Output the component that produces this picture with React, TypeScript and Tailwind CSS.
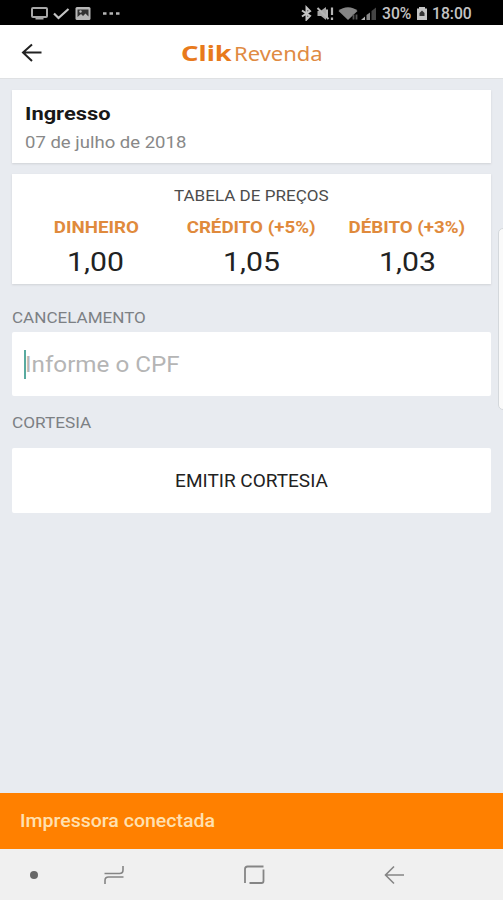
import type { ReactNode } from "react";

const prices = [
  { label: "DINHEIRO", value: "1,00" },
  { label: "CRÉDITO (+5%)", value: "1,05" },
  { label: "DÉBITO (+3%)", value: "1,03" },
];

// Wide text: the app's type is a bit broader than plain Roboto
const Wide = ({
  className,
  children,
}: {
  className: string;
  children: ReactNode;
}) => (
  <span className={`inline-block whitespace-nowrap ${className}`}>
    {children}
  </span>
);

const StatusBar = () => (
  <div className="flex h-[25px] items-center bg-black pl-[30px] pr-[32px] text-[#c4c4c4]">
    <svg width="92" height="16" viewBox="0 0 92 16" fill="none">
      <rect x="2" y="3" width="15" height="9" rx="1" stroke="#a8a8a8" strokeWidth="2" />
      <path d="M5.500 13.500h8" stroke="#a8a8a8" strokeWidth="2" />
      <path d="M24 8.500l4.500 4.500L38.500 4" stroke="#c4c4c4" strokeWidth="2.200" />
      <rect x="45.500" y="2" width="15" height="13" rx="1.500" fill="#b8b8b8" />
      <path d="M47.500 4.500h11v7l-3-3-2.500 2.500-2-2-3.500 3z" fill="#333" />
      <circle cx="50.500" cy="6.500" r="1.200" fill="#b8b8b8" />
      <path d="M73 8.500h3.500M79.500 8.500H83M86 8.500h3.500" stroke="#b5b5b5" strokeWidth="2.500" />
    </svg>
    <div className="ml-auto flex items-center">
      <svg width="80" height="16" viewBox="0 0 80 16" fill="none">
        <path d="M1 5.500l8 5.500-3.500 3.500V2.500L9 6l-8 5.500" stroke="#c4c4c4" strokeWidth="2" />
        <path d="M16.500 6h3L25 2v13l-5-4h-3.500z" fill="#a8a8a8" />
        <path d="M16.500 3l11 11M26 4.500v8" stroke="#b5b5b5" strokeWidth="2" />
        <path d="M31 2.500v7.500M31 12.500V15" stroke="#b5b5b5" strokeWidth="2.200" />
        <path d="M37.500 6c5-5 14-5 19 0L47 15z" fill="#858585" />
        <path d="M52.500 9.500v5M55.500 9.500v5" stroke="#555" strokeWidth="1.800" />
        <path d="M60 15l4-3.500V15z" fill="#b5b5b5" />
        <path d="M65.500 10L69 7.500V15h-3.500z" fill="#888" />
        <path d="M70.500 6L75 2.500V15h-4.500z" fill="#444" />
      </svg>
      <Wide className="mt-[2px] ml-[1px] w-[31px] origin-left scale-x-[0.98] text-[16px] leading-none font-medium">
        30%
      </Wide>
      <svg width="12" height="16" viewBox="0 0 12 16" className="ml-[3px]">
        <path d="M3 3.500V2h6v1.500h2V15H1V3.500z" fill="#c4c4c4" />
        <path d="M3.500 11V8L6 5.500 8.500 8v3z" fill="#333" />
      </svg>
      <Wide className="mt-[2px] ml-[4px] w-[39px] origin-left scale-x-[0.98] text-[16px] leading-none font-medium">
        18:00
      </Wide>
    </div>
  </div>
);

const Header = () => (
  <header className="flex h-[54px] items-center border-b border-[#dfe1e3] bg-white pl-[20px]">
    <svg width="23" height="20" viewBox="0 0 23 20" className="mt-[2px]" fill="none" stroke="#222" strokeWidth="2">
      <path d="M21.500 9.500H3M12 1.500L3 9.500l9 8.500" />
    </svg>
    <div className="mt-[2px] ml-[138px] flex items-baseline font-['Noto_Sans'] leading-none text-[#e87a1c]">
      <Wide className="w-[53px] origin-left scale-x-[1.24] text-[22px] font-bold">
        Clik
      </Wide>
      <Wide className="origin-left scale-x-[1.1] text-[20px] text-[#e08a42]">
        Revenda
      </Wide>
    </div>
  </header>
);

const PriceTable = () => (
  <div className="mt-[11px] h-[110px] bg-white px-[6px] pt-[12px] text-center shadow-[0_1px_2px_#cfd2d6]">
    <div className="h-[19px] leading-[19px]">
      <Wide className="scale-x-[1.1] text-[15.5px] text-[#4c4c4c]">
        TABELA DE PREÇOS
      </Wide>
    </div>
    <div className="grid grid-cols-3">
      {prices.map((price) => (
        <div key={price.label}>
          <div className="mt-[13px] h-[20px] leading-[20px]">
            <Wide className="scale-x-[1.17] text-[16px] font-bold text-[#e08a3c]">
              {price.label}
            </Wide>
          </div>
          <div className="mt-[8px] h-[32px] leading-[32px]">
            <Wide className="scale-x-[1.16] text-[26px] text-[#222]">
              {price.value}
            </Wide>
          </div>
        </div>
      ))}
    </div>
  </div>
);

const NavigationBar = () => (
  <nav className="flex h-[51px] items-center bg-[#f0f0f0] pt-[1px]">
    <span className="ml-[30px] h-[8px] w-[8px] rounded-full bg-[#686868]" />
    <svg width="22" height="22" viewBox="0 0 22 22" className="ml-[65px]" fill="none" stroke="#858585" strokeWidth="1.600">
      <path d="M1.500 9.500h15q3.500 0 3.500-3.500V2" />
      <path d="M20.500 13H5.500Q2 13 2 16.500V20" />
    </svg>
    <svg width="22" height="20" viewBox="0 0 22 20" className="ml-[118px]" fill="none" stroke="#858585" strokeWidth="1.800">
      <path d="M20.500 1.500H4.500Q2 1.500 2 4v14" />
      <path d="M20.500 4.500V16q0 2-2 2H6.500" />
    </svg>
    <svg width="22" height="20" viewBox="0 0 22 20" className="ml-[118px]" fill="none" stroke="#858585" strokeWidth="1.600">
      <path d="M21 10H2.500M11 1.500L2.500 10l8.500 8.500" />
    </svg>
  </nav>
);

const App = () => {
  return (
    <div className="relative flex h-[900px] w-[503px] flex-col overflow-hidden bg-[#e8ebf0] font-['Roboto',sans-serif]">
      <StatusBar />
      <Header />

      <main className="flex-1 px-[12px] pt-[11px]">
        <div className="h-[73px] bg-white px-[13px] pt-[13px] shadow-[0_1px_2px_#cfd2d6]">
          <div className="h-[22px] leading-[22px]">
            <Wide className="origin-left scale-x-[1.15] text-[19px] font-bold text-[#181818]">
              Ingresso
            </Wide>
          </div>
          <div className="mt-[7px] h-[20px] leading-[20px]">
            <Wide className="origin-left scale-x-[1.09] text-[17px] text-[#888]">
              07 de julho de 2018
            </Wide>
          </div>
        </div>

        <PriceTable />

        <h3 className="mt-[24px] h-[20px] leading-[20px]">
          <Wide className="origin-left scale-x-[1.1] text-[15.5px] text-[#7c8084]">
            CANCELAMENTO
          </Wide>
        </h3>
        <div className="mt-[4px] flex h-[64px] items-center rounded-[2px] bg-white pl-[12px]">
          <span className="h-[29px] w-[2px] bg-[#58aaa0]" />
          <Wide className="mt-[1px] -ml-px origin-left scale-x-[1.1] text-[22px] text-[#b5b5b5]">
            Informe o CPF
          </Wide>
        </div>

        <h3 className="mt-[17px] h-[20px] leading-[20px]">
          <Wide className="origin-left scale-x-[1.11] text-[15.5px] text-[#7c8084]">
            CORTESIA
          </Wide>
        </h3>
        <button className="mt-[15px] flex h-[65px] w-full items-center justify-center rounded-[2px] bg-white pt-[2px]">
          <Wide className="text-[19px] text-[#222]">EMITIR CORTESIA</Wide>
        </button>
      </main>

      {/* Edge panel handle */}
      <div className="absolute top-[228px] right-[-8px] h-[182px] w-[13px] rounded-[5px] border border-[#d4d8dc] bg-[#fafafa]" />

      <div className="flex h-[56px] items-center bg-[#ff8000] pt-[1px] pl-[20px]">
        <Wide className="origin-left scale-x-[1.115] text-[17.5px] font-medium text-[#ffe0b0]">
          Impressora conectada
        </Wide>
      </div>
      <NavigationBar />
    </div>
  );
};

export default App;
